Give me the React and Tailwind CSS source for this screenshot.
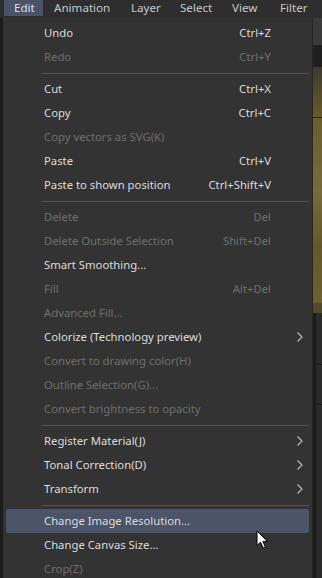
import React from "react";

const rows = [
  { t: "Undo", s: "Ctrl+Z" },
  { t: "Redo", s: "Ctrl+Y", d: true },
  { sep: true },
  { t: "Cut", s: "Ctrl+X" },
  { t: "Copy", s: "Ctrl+C" },
  { t: "Copy vectors as SVG(K)", d: true },
  { t: "Paste", s: "Ctrl+V" },
  { t: "Paste to shown position", s: "Ctrl+Shift+V" },
  { sep: true },
  { t: "Delete", s: "Del", d: true },
  { t: "Delete Outside Selection", s: "Shift+Del", d: true },
  { t: "Smart Smoothing..." },
  { t: "Fill", s: "Alt+Del", d: true },
  { t: "Advanced Fill...", d: true },
  { t: "Colorize (Technology preview)", sub: true },
  { t: "Convert to drawing color(H)", d: true },
  { t: "Outline Selection(G)...", d: true },
  { t: "Convert brightness to opacity", d: true },
  { sep: true },
  { t: "Register Material(J)", sub: true },
  { t: "Tonal Correction(D)", sub: true },
  { t: "Transform", sub: true },
  { sep: true },
  { t: "Change Image Resolution...", hl: true },
  { t: "Change Canvas Size..." },
  { t: "Crop(Z)", d: true },
];

function Chevron() {
  return (
    <svg width="8" height="12" viewBox="0 0 8 12" className="block">
      <path d="M1.5 1.5 L6 6 L1.5 10.5" fill="none" stroke="#b8b8b8" strokeWidth="1.2" />
    </svg>
  );
}

export default function App() {
  return (
    <div
      className="relative w-[322px] h-[578px] overflow-hidden bg-[#1e1e1e] text-[11.3px]"
      style={{ fontFamily: '"Noto Sans", "Open Sans", sans-serif' }}
    >
      {/* menubar */}
      <div className="flex h-[18px] bg-[#2e2e2e] text-[#c9c9c9] text-[11.6px] leading-[16px]">
        <div className="ml-[4px] w-[39px] h-[16px] pl-[10px] bg-[#4a5367] text-[#dde2ea]">Edit</div>
        <div className="w-[77px] pl-[11px]">Animation</div>
        <div className="w-[49px] pl-[11px]">Layer</div>
        <div className="w-[52px] pl-[11px]">Select</div>
        <div className="w-[48px] pl-[11px]">View</div>
        <div className="pl-[11px]">Filter</div>
      </div>

      <div className="flex h-[560px]">
        <div className="w-[3px] bg-[#1c1c1c]" />
        <div className="w-[310px] bg-[#333333] pt-[3px] border-r border-[#262626]">
          {rows.map((r, i) =>
            r.sep ? (
              <div key={i} className="h-[8px] pt-[4px] pl-[39px] pr-[3px]">
                <div className="h-px bg-[#555555]" />
              </div>
            ) : (
              <div key={i} className="px-[3px]">
                <div
                  className={
                    "flex items-center h-[24px] pl-[38px] rounded-[2px] " +
                    (r.hl ? "bg-[#4b5469] " : "") +
                    (r.d ? "text-[#6f6f6f]" : "text-[#dcdcdc]")
                  }
                >
                  <span className="flex-1 whitespace-nowrap">{r.t}</span>
                  {r.s && <span className="whitespace-nowrap">{r.s}</span>}
                  <span className="w-[38px] pl-[25px] flex items-center">{r.sub && <Chevron />}</span>
                </div>
              </div>
            )
          )}
        </div>
        {/* right strip */}
        <div className="flex-1 flex flex-col">
          <div className="h-[27px] bg-[#3a3a3a]" />
          <div className="h-[22px] bg-[#1f1f1f]" />
          <div className="h-[50px] bg-[linear-gradient(180deg,#3c3a2c,#6a5a2c)]" />
          <div className="h-px bg-[#2a2414]" />
          <div className="h-[185px] bg-[linear-gradient(180deg,#6d5d2e,#7a6a38_40%,#665629_70%,#6f6030)]" />
          <div className="h-[10px] bg-[#4e4a2a]" />
          <div className="flex-1 bg-[#2a2a2a] flex">
            <div className="w-[3px] bg-[#1c1c1c]" />
            <div className="flex-1 flex flex-col">
              <div className="h-[52px] border-b border-[#1a1a1a]" />
              <div className="h-[40px] border-b border-[#1a1a1a]" />
              <div className="flex-1" />
            </div>
          </div>
        </div>
      </div>

      {/* cursor */}
      <svg className="absolute left-[256px] top-[530px]" width="14" height="20" viewBox="0 0 14 20">
        <path
          d="M1 1 L1 15.5 L4.5 12.2 L7.2 18 L9.4 17 L6.8 11.4 L11.5 11.4 Z"
          fill="#ffffff"
          stroke="#000000"
          strokeWidth="1"
          strokeLinejoin="miter"
        />
      </svg>
    </div>
  );
}
